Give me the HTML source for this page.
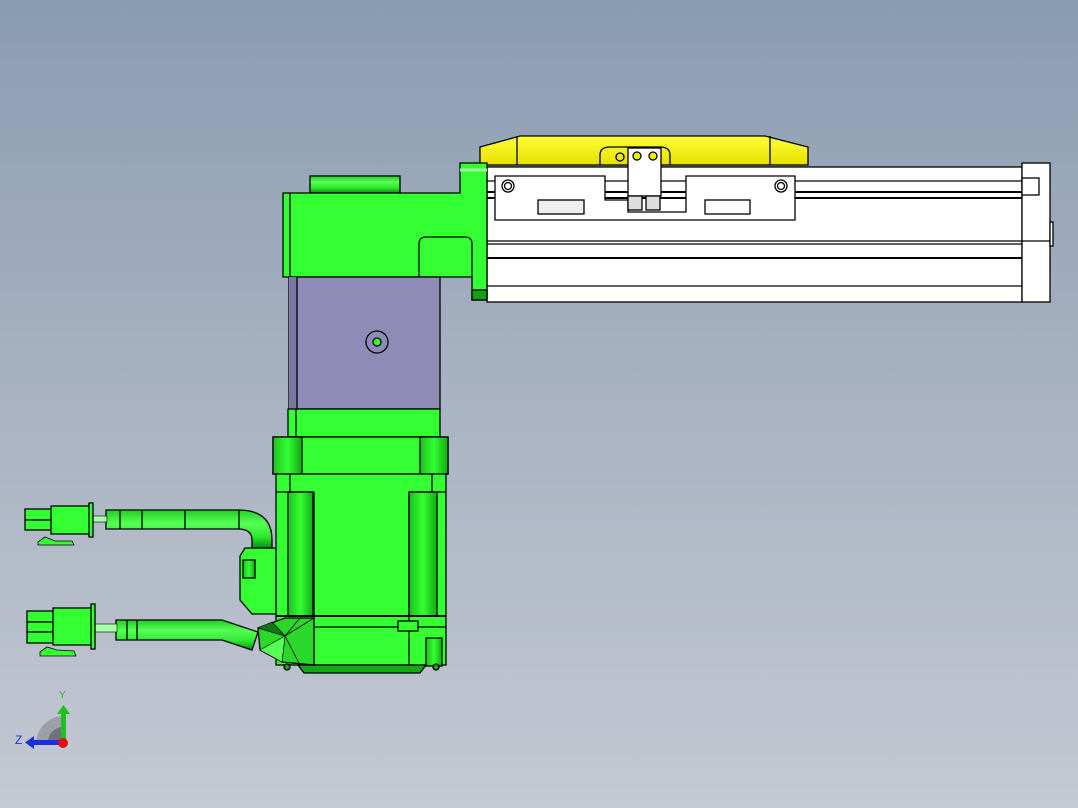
<!DOCTYPE html>
<html><head><meta charset="utf-8"><style>
html,body{margin:0;padding:0;width:1078px;height:808px;overflow:hidden}
body{background:linear-gradient(#8a9cb1,#a9b3c2 50%,#c4c9d3)}
svg{position:absolute;left:0;top:0}
</style></head><body>
<svg width="1078" height="808" viewBox="0 0 1078 808" font-family="Liberation Sans, sans-serif">
<defs>
<linearGradient id="cyl" x1="0" y1="0" x2="0" y2="1"><stop offset="0" stop-color="#22cc22"/><stop offset=".35" stop-color="#55ff55"/><stop offset=".7" stop-color="#2ee82e"/><stop offset="1" stop-color="#0a900a"/></linearGradient>
<linearGradient id="cylv" x1="0" y1="0" x2="1" y2="0"><stop offset="0" stop-color="#1cc01c"/><stop offset=".5" stop-color="#33ff33"/><stop offset="1" stop-color="#13a813"/></linearGradient>
<linearGradient id="yel" x1="0" y1="0" x2="0" y2="1"><stop offset="0" stop-color="#ffff3a"/><stop offset="1" stop-color="#e6e000"/></linearGradient>
</defs>
<g stroke="#000" stroke-width="1.3">
<path d="M480,147 L520,136 L765,136 L808,147 L808,165 L480,165 Z" fill="url(#yel)"/>
<line x1="517" y1="136" x2="517" y2="165"/><line x1="770" y1="136" x2="770" y2="165"/>
<path d="M600,165 L600,155 Q600,147 610,147 L660,147 Q670,147 670,155 L670,165" fill="none"/>
<rect x="487" y="167" width="535" height="135" fill="#fff"/>
<line x1="487" y1="181" x2="1022" y2="181"/><line x1="487" y1="192" x2="1022" y2="192" stroke-width="2"/>
<line x1="487" y1="198" x2="1022" y2="198" stroke-width="2"/>
<line x1="487" y1="241" x2="1022" y2="241"/><line x1="487" y1="244" x2="1022" y2="244"/>
<line x1="487" y1="258" x2="1022" y2="258" stroke-width="2"/><line x1="487" y1="286" x2="1022" y2="286"/>
<rect x="1022" y="163" width="28" height="139" fill="#fff"/>
<rect x="1022" y="178" width="17" height="17" fill="#fff"/>
<line x1="1022" y1="241" x2="1050" y2="241"/>
<rect x="1050" y="222" width="3" height="24" fill="#fff"/>
<path d="M495,176 L605,176 L605,200 L628,200 L628,212 L686,212 L686,176 L795,176 L795,220 L495,220 Z" fill="#fff"/>
<rect x="538" y="200" width="46" height="14" fill="#eee"/>
<rect x="705" y="200" width="45" height="14" fill="#fff"/>
<circle cx="508" cy="186" r="6" fill="#fff"/><circle cx="508" cy="186" r="3.5" fill="none"/>
<circle cx="781" cy="186" r="6" fill="#fff"/><circle cx="781" cy="186" r="3.5" fill="none"/>
<rect x="628" y="148" width="33" height="48" fill="#fff"/>
<rect x="628" y="196" width="14" height="14" fill="#ddd"/><rect x="646" y="196" width="14" height="14" fill="#ddd"/>
<circle cx="637" cy="156" r="4" fill="#ee0"/><circle cx="653" cy="156" r="4" fill="#ee0"/>
<circle cx="620" cy="157" r="4" fill="none"/>
<rect x="310" y="176" width="90" height="17" fill="url(#cyl)"/>
<path d="M460,163 L487,163 L487,300 L472,300 L472,277 L283,277 L283,193 L460,193 Z" fill="#33ff33"/>
<line x1="290" y1="193" x2="290" y2="277"/>
<line x1="460" y1="170" x2="487" y2="170" stroke="#9f9" stroke-width="3"/>
<path d="M419,277 L419,244 Q419,237 426,237 L465,237 Q472,237 472,244 L472,277" fill="none"/>
<rect x="472" y="290" width="15" height="10" fill="#11a011"/>
<rect x="289" y="277" width="151" height="132" fill="#8e8cb7"/>
<rect x="289" y="277" width="8" height="132" fill="#7a78a0" stroke="none"/>
<line x1="297" y1="277" x2="297" y2="409"/>
<circle cx="377" cy="342" r="11" fill="none"/><circle cx="377" cy="342" r="4" fill="#33ff33"/>
<rect x="288" y="409" width="152" height="28" fill="#33ff33"/>
<line x1="296" y1="409" x2="296" y2="437"/>
<rect x="273" y="437" width="175" height="37" fill="#33ff33"/>
<rect x="273" y="437" width="29" height="37" fill="url(#cylv)"/>
<rect x="420" y="437" width="28" height="37" fill="url(#cylv)"/>
<rect x="276" y="474" width="170" height="191" fill="#33ff33"/>
<line x1="290" y1="474" x2="290" y2="492"/><line x1="432" y1="474" x2="432" y2="492"/>
<rect x="288" y="492" width="25" height="124" fill="url(#cylv)"/>
<rect x="409" y="492" width="28" height="124" fill="url(#cylv)"/>
<line x1="276" y1="492" x2="314" y2="492"/><line x1="409" y1="492" x2="446" y2="492"/>
<line x1="314" y1="492" x2="314" y2="616"/><line x1="409" y1="492" x2="409" y2="665"/>
<line x1="276" y1="616" x2="446" y2="616" stroke-width="2"/>
<line x1="314" y1="627" x2="446" y2="627"/>
<line x1="314" y1="616" x2="314" y2="665"/>
<rect x="398" y="621" width="20" height="10" fill="#33ff33"/>
<rect x="426" y="638" width="16" height="28" fill="url(#cylv)"/>
<path d="M298,665 L426,665 L420,673 L304,673 Z" fill="#14a814"/>
<circle cx="287" cy="667" r="3" fill="#14a814"/><circle cx="436" cy="667" r="3" fill="#14a814"/>
<path d="M245,548 L276,548 L276,614 L252,614 L240,600 L240,556 Z" fill="#33ff33"/>
<rect x="243" y="560" width="12" height="18" fill="url(#cylv)"/>
<path d="M106,510 L238,510 Q272,510 272,540 L272,548 L252,548 L252,540 Q252,529 238,529 L106,529 Z" fill="url(#cyl)"/>
<line x1="120" y1="510" x2="120" y2="529"/><line x1="142" y1="510" x2="142" y2="529"/><line x1="185" y1="510" x2="185" y2="529"/><line x1="239" y1="510" x2="239" y2="529"/>
<rect x="93" y="516" width="14" height="6" fill="#aaffaa" stroke-width=".6"/>
<rect x="25" y="509" width="27" height="11" fill="#33ff33"/><rect x="25" y="520" width="27" height="10" fill="#33ff33"/>
<rect x="51" y="506" width="41" height="28" fill="#33ff33"/>
<rect x="89" y="503" width="4" height="34" fill="#33ff33"/>
<path d="M38,542 L45,537 L55,541 L72,541 L74,545 L38,545 Z" fill="#33ff33" stroke-width=".8"/>
<path d="M116,620 L222,620 L258,632 L252,650 L222,640 L116,640 Z" fill="url(#cyl)"/>
<line x1="127" y1="620" x2="127" y2="640"/><line x1="137" y1="620" x2="137" y2="640"/>
<rect x="95" y="624" width="22" height="8" fill="#aaffaa" stroke-width=".6"/>
<rect x="27" y="611" width="27" height="11" fill="#33ff33"/><rect x="27" y="622" width="27" height="10" fill="#33ff33"/><rect x="27" y="632" width="27" height="11" fill="#33ff33"/>
<rect x="53" y="608" width="41" height="37" fill="#33ff33"/>
<rect x="91" y="604" width="4" height="45" fill="#33ff33"/>
<path d="M40,652 L47,647 L57,650 L74,651 L76,656 L40,656 Z" fill="#33ff33" stroke-width=".8"/>
<path d="M258,628 L285,618 L314,618 L314,665 L282,662 L260,650 Z" fill="#2ad82a"/>
<path d="M285,636 L258,628 M285,636 L262,650 M285,636 L282,662 M285,636 L300,665 M285,636 L314,618 M285,636 L300,618 M285,636 L272,622" fill="none" stroke-width=".8"/>
<path d="M258,628 L272,622 L285,636 Z" fill="#0c7a0c" stroke-width=".6"/>
<path d="M260,650 L282,662 L285,636 Z" fill="#55ff55" stroke-width=".6"/>
</g>
<path d="M36,742 A28,28 0 0 1 63,716 L63,742 Z" fill="#9aa0a8"/>
<path d="M48,742 A15,15 0 0 1 63,727 L63,742 Z" fill="#6e737a"/>
<rect x="61" y="712" width="5" height="30" fill="#1ec01e"/>
<path d="M57,714 L63.5,705 L70,714 Z" fill="#1ec01e"/>
<rect x="32" y="740" width="30" height="5" fill="#1a2fe0"/>
<path d="M34,736 L25,742.5 L34,749 Z" fill="#1a2fe0"/>
<circle cx="63" cy="743" r="5" fill="#e01010"/>
<text x="59" y="698" font-size="10" fill="#1ec01e">Y</text>
<text x="15" y="744" font-size="12" fill="#1a2fe0">Z</text>
</svg>
</body></html>
